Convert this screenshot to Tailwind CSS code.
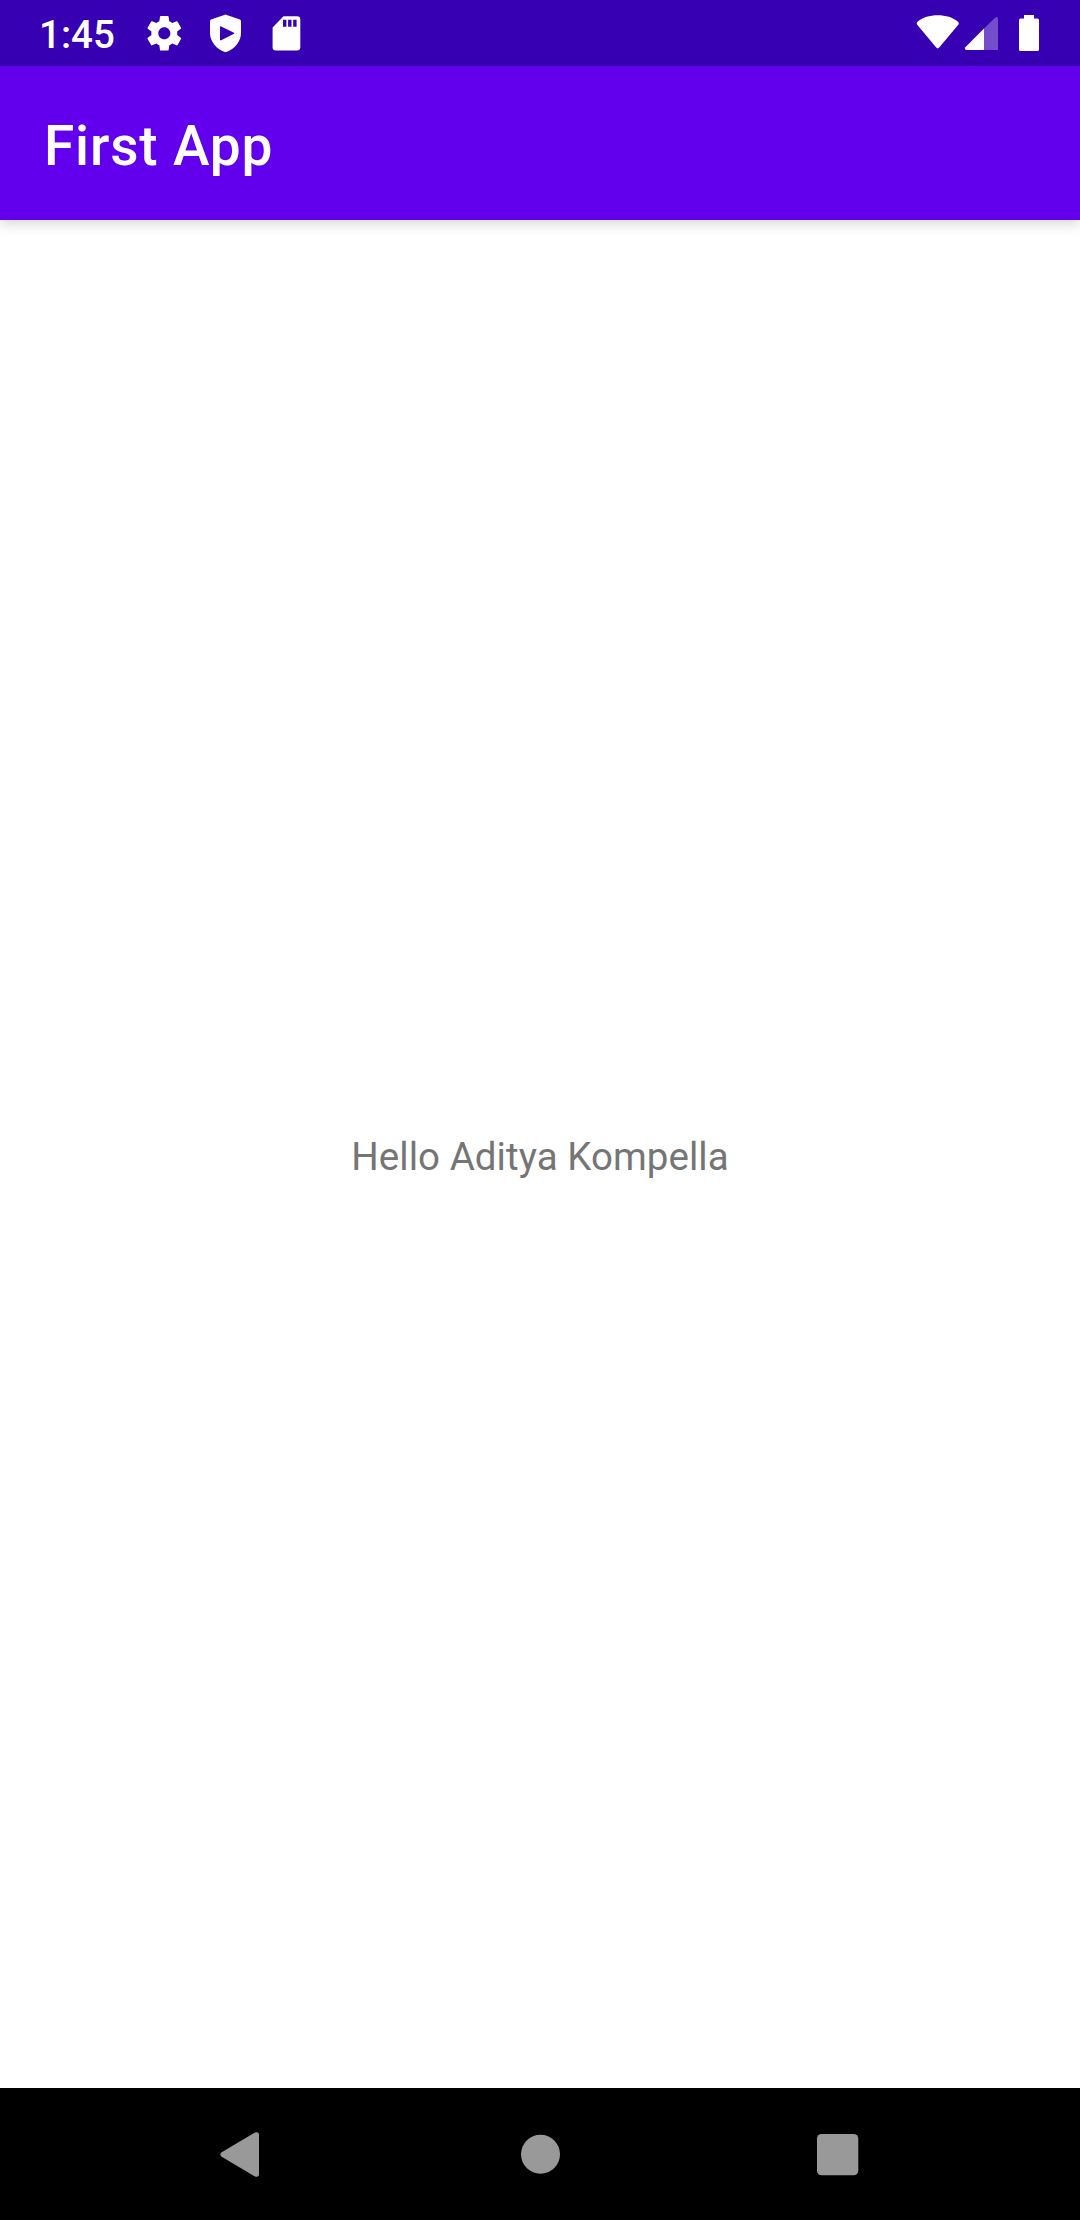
<!DOCTYPE html>
<html lang="en">
<head>
<meta charset="utf-8">
<title>First App</title>
<script src="https://cdn.jsdelivr.net/npm/@tailwindcss/browser@4"></script>
</head>
<body class="flex h-[2220px] w-[1080px] flex-col overflow-hidden bg-white font-[Roboto,sans-serif]">
  <div class="flex h-[66px] shrink-0 justify-between bg-[#3700b3] text-white">
    <div class="flex pl-[39px]">
      <span class="w-[95px] pt-[6px] text-[38.5px] leading-[58px] font-medium whitespace-nowrap">1:45</span>
      <!-- settings, play protect, SD card -->
      <svg class="h-[66px] w-[61px]" viewBox="134 0 61 66" fill="currentColor"><path transform="translate(143.55 12.55) scale(1.73)" d="M19.43 12.98c.04-.32.07-.64.07-.98s-.03-.66-.07-.98l2.11-1.65c.19-.15.24-.42.12-.64l-2-3.46c-.12-.22-.39-.3-.61-.22l-2.49 1c-.52-.4-1.08-.73-1.69-.98l-.38-2.65C14.46 2.18 14.25 2 14 2h-4c-.25 0-.46.18-.49.42l-.38 2.65c-.61.25-1.17.59-1.69.98l-2.49-1c-.23-.09-.49 0-.61.22l-2 3.46c-.13.22-.07.49.12.64l2.11 1.65c-.04.32-.07.65-.07.98s.03.66.07.98l-2.11 1.65c-.19.15-.24.42-.12.64l2 3.46c.12.22.39.3.61.22l2.49-1c.52.4 1.08.73 1.69.98l.38 2.65c.03.24.24.42.49.42h4c.25 0 .46-.18.49-.42l.38-2.65c.61-.25 1.17-.59 1.69-.98l2.49 1c.23.09.49 0 .61-.22l2-3.46c.12-.22.07-.49-.12-.64l-2.11-1.65zM12 15.5c-1.93 0-3.5-1.57-3.5-3.5s1.57-3.5 3.5-3.5 3.5 1.57 3.5 3.5-1.57 3.5-3.5 3.5z"/></svg>
      <svg class="h-[66px] w-[61px]" viewBox="195 0 61 66" fill="currentColor" fill-rule="evenodd"><path d="M224.2 14.9q1.3-.6 2.6 0L240 19.6q1 .5 1 1.6V33C241 41.5 234.5 49.500 225.500 52.200C216.500 49.500 210 41.500 210 33V21.200q0-1.100 1-1.600ZM220 27v12.700q.2 1 1.200.5L234 33.800q.7-.5 0-1L221.200 26.500Q220.200 26 220 27Z"/></svg>
      <svg class="h-[66px] w-[61px]" viewBox="256 0 61 66" fill="currentColor" fill-rule="evenodd"><path d="M283.500 16.200H297Q300.300 16.200 300.300 19.500V47.200Q300.300 50.500 297 50.500H275.900Q272.600 50.500 272.600 47.200V27.500ZM283 19.700V26.700H286.400V19.700ZM288.100 19.700V26.700H291.500V19.700ZM293.200 19.700V26.700H296.600V19.700Z"/></svg>
    </div>
    <!-- wifi, mobile signal, battery -->
    <div class="flex">
      <svg class="h-[66px] w-[50px]" viewBox="912 0 50 66" fill="currentColor"><path d="M917 24.500Q916 23 917.500 21.800C927 13.200 948.500 13.200 958 21.800Q959.500 23 958.500 24.500L939.200 47.600Q937.700 49.200 936.200 47.600Z"/></svg>
      <svg class="h-[66px] w-[44px]" viewBox="962 0 44 66" fill="currentColor"><path fill-opacity=".3" d="M984 28.600L995.300 17.400Q998 16 998 18.700V50H984Z"/><path d="M984 28.600V50H966.300Q964 49.500 965.300 47.300Z"/></svg>
      <svg class="h-[66px] w-[74px]" viewBox="1006 0 74 66" fill="currentColor"><path d="M1024 15H1034V18.400H1037.400Q1039 18.400 1039 20V49.400Q1039 51 1037.400 51H1020.600Q1019 51 1019 49.400V20Q1019 18.400 1020.600 18.400H1024Z"/></svg>
    </div>
  </div>
  <header class="z-10 flex h-[154px] shrink-0 items-center bg-[#6200ee] pl-[44px] shadow-[0_4px_12px_rgba(0,0,0,0.16)]">
    <h1 class="pt-[6px] text-[55px] leading-[64px] font-medium tracking-[0.015em] text-white">First App</h1>
  </header>
  <main class="flex grow items-center justify-center">
    <p class="pt-[6px] text-[38.5px] leading-[46px] tracking-[0.05px] text-[#757575]">Hello Aditya Kompella</p>
  </main>
  <nav class="flex h-[132px] shrink-0 bg-black text-[#999999]">
    <svg class="h-[132px] w-[390px]" viewBox="0 2088 390 132" fill="currentColor"><path d="M221.700 2152.200L254.500 2132.700Q259 2131 259 2135V2174Q259 2178 254.500 2176.200L221.700 2156.800Q219 2154.500 221.700 2152.200Z"/></svg>
    <svg class="h-[132px] w-[300px]" viewBox="390 2088 300 132" fill="currentColor"><circle cx="540.500" cy="2154.300" r="19.500"/></svg>
    <svg class="h-[132px] w-[390px]" viewBox="690 2088 390 132" fill="currentColor"><rect x="817" y="2134" width="41.300" height="41.300" rx="4.500"/></svg>
  </nav>
</body>
</html>
